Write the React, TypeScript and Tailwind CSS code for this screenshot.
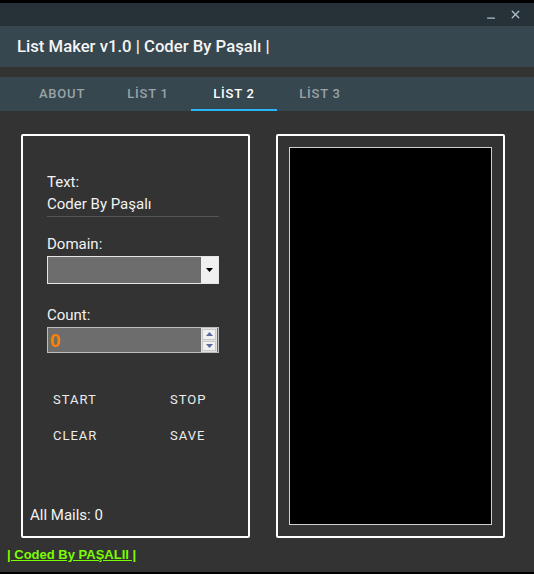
import { Minus, X } from "lucide-react";

const tabs = ["ABOUT", "LİST 1", "LİST 2", "LİST 3"];

const roboto = { fontFamily: "Roboto, 'Noto Sans', sans-serif" };

const App = () => {
    return (
        <div className="w-[534px] h-[574px] flex flex-col bg-[#333333] border-t-[3px] border-b-2 border-black overflow-hidden" style={roboto}>
            {/* title bar */}
            <div className="h-[23px] bg-[#263238] flex items-center justify-end pr-[12px] gap-[12px] text-[#b0bec5]">
                <Minus className="w-[12px] h-[12px] mt-[6px]" strokeWidth={2.5} />
                <X className="w-[13px] h-[13px]" strokeWidth={2.5} />
            </div>

            {/* header */}
            <div className="h-[41px] bg-[#37474f] flex items-center pl-[17px]">
                <span className="text-[16.7px] font-medium text-[#f5f5f5]">List Maker v1.0 | Coder By Paşalı |</span>
            </div>

            <div className="h-[10px] bg-[#333333] ml-[1px] mr-[1px]" />

            {/* tabs */}
            <div className="h-[34px] bg-[#37474f] flex pl-[19px]">
                {tabs.map((t, i) => (
                    <div
                        key={t}
                        className={
                            "w-[86px] pt-[2px] flex items-center justify-center text-[13px] font-medium tracking-[0.8px] border-b-2 " +
                            (i === 2 ? "text-white border-[#29b6f6]" : "text-[#9aa3a7] border-transparent")
                        }
                    >
                        {t}
                    </div>
                ))}
            </div>

            {/* content */}
            <div className="flex-1 flex flex-col">
                <div className="flex gap-[26px] pl-[21px] pt-[23px]">
                    {/* left panel */}
                    <div className="w-[229px] h-[404px] border-2 border-white rounded-[2px] flex flex-col text-[#f2f2f2]">
                        <div className="flex flex-col pl-[24px] pt-[37px] w-[196px]">
                            <div className="text-[15px] leading-[18px]">Text:</div>
                            <div className="text-[15px] leading-[18px] mt-[4px] pb-[3px] border-b border-[#555555]">Coder By Paşalı</div>

                            <div className="text-[15px] leading-[18px] mt-[18px]">Domain:</div>
                            <div className="mt-[3px] h-[28px] flex border border-[#e6e6e6] bg-[#6d6d6d]">
                                <div className="flex-1" />
                                <div className="w-[17px] bg-[#f0f0f0] flex items-center justify-center">
                                    <svg width="7" height="4" viewBox="0 0 7 4"><path d="M0 0h7L3.5 4z" fill="#000" /></svg>
                                </div>
                            </div>

                            <div className="text-[15px] leading-[18px] mt-[22px]">Count:</div>
                            <div className="mt-[3px] h-[26px] flex items-center border border-[#bdbdbd] bg-[#6d6d6d]">
                                <span className="flex-1 pl-[2px] text-[19px] font-bold text-[#ff8000] leading-none" style={{ fontFamily: "'Liberation Sans', sans-serif" }}>0</span>
                                <div className="w-[16px] h-[24px] flex flex-col gap-[1px] p-[1px] mr-[1px] bg-[#e0e0e0]">
                                    <div className="flex-1 bg-[#f0f0f0] border border-[#c8c8c8] flex items-center justify-center">
                                        <svg width="7" height="4" viewBox="0 0 7 4"><path d="M0 4h7L3.5 0z" fill="#5a6aa0" /></svg>
                                    </div>
                                    <div className="flex-1 bg-[#f0f0f0] border border-[#c8c8c8] flex items-center justify-center">
                                        <svg width="7" height="4" viewBox="0 0 7 4"><path d="M0 0h7L3.5 4z" fill="#5a6aa0" /></svg>
                                    </div>
                                </div>
                            </div>

                            <div className="grid grid-cols-[117px_1fr] pl-[6px] mt-[38px] gap-y-[18px] text-[13px] leading-[18px] font-normal tracking-[1px] text-[#ececec]">
                                <span>START</span>
                                <span>STOP</span>
                                <span>CLEAR</span>
                                <span>SAVE</span>
                            </div>
                        </div>
                        <div className="mt-auto pl-[7px] pb-[12px] text-[15px] leading-[18px]">All Mails: 0</div>
                    </div>

                    {/* right panel */}
                    <div className="w-[229px] h-[404px] border-2 border-white rounded-[2px] p-[11px]">
                        <div className="w-full h-full bg-black border border-[#cfcfcf]" />
                    </div>
                </div>

                <div className="pl-[7px] mt-[4px]">
                    <span className="text-[13px] font-bold text-[#7cfc00] underline" style={{ fontFamily: "'Liberation Sans', sans-serif" }}>
                        | Coded By PAŞALII |
                    </span>
                </div>
            </div>
        </div>
    );
};

export default App;
